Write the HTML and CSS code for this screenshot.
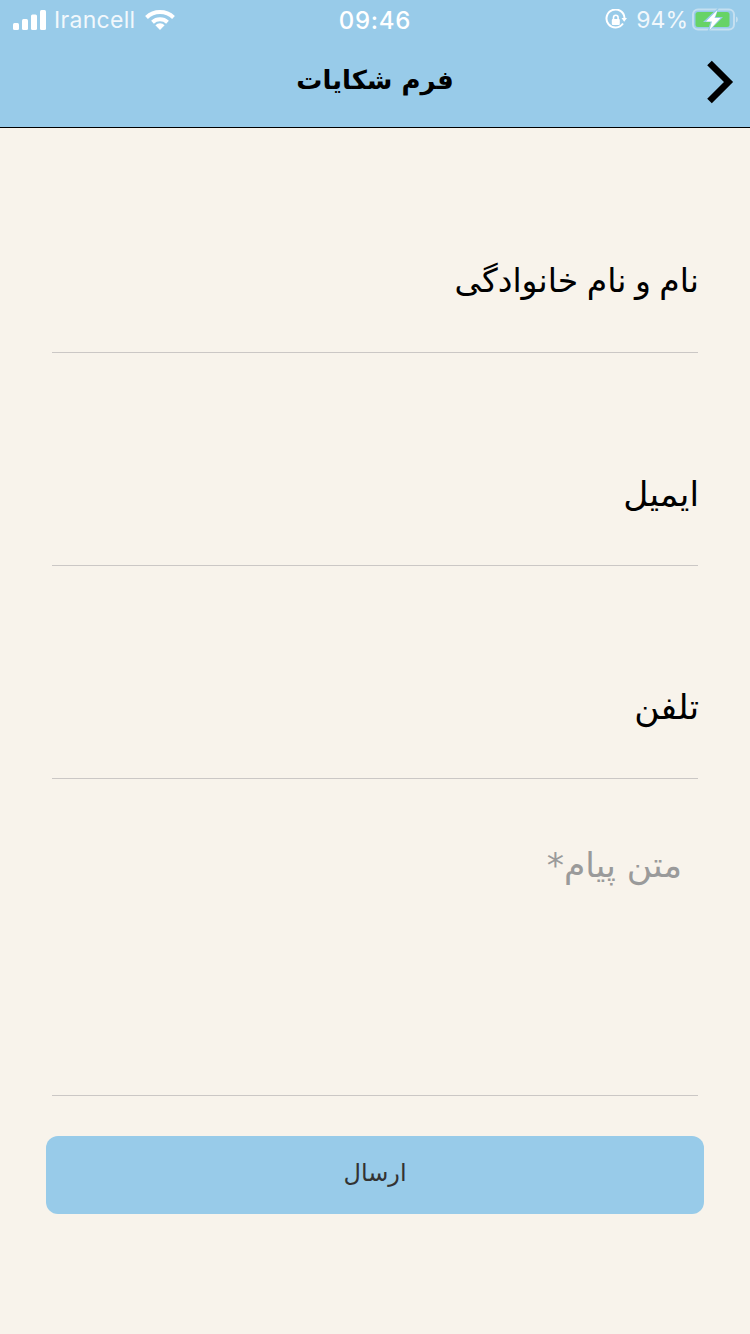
FILE: index.html
```html
<!DOCTYPE html>
<html lang="fa">
<head>
<meta charset="utf-8">
<title>فرم شکایات</title>
<link rel="stylesheet" href="styles.css">
</head>
<body>
<div class="top">
  <div class="status">
    <div class="status-side">
      <svg class="signal" width="33" height="22" viewBox="0 0 33 22"><rect x="0" y="14" width="6" height="7" rx="1.5"/><rect x="9" y="10" width="6" height="11" rx="1.5"/><rect x="18" y="5.500" width="6" height="15.500" rx="1.500"/><rect x="27" y="1" width="6" height="20" rx="1.500"/></svg>
      <span class="carrier">Irancell</span>
      <svg class="wifi" width="30" height="22" viewBox="0 0 30 22"><path d="M15 21l-4.600-4.800a6.500 6.500 0 0 1 9.200 0z"/><path d="M1.500 8.500a19.500 19.500 0 0 1 27 0" class="arc"/><path d="M7.500 13.300a11 11 0 0 1 15 0" class="arc"/></svg>
    </div>
    <div class="clock">09:46</div>
    <div class="status-side">
      <svg class="lock" width="22" height="22" viewBox="0 0 22 22"><path class="ring" d="M18 14.500A9 9 0 1 1 19.500 9"/><path class="fill" d="M16.500 9h5.500l-2.800 3.800z"/><rect class="fill" x="6.800" y="10" width="8" height="6" rx="1"/><path class="shackle" d="M8.500 10V8.500a2.300 2.300 0 0 1 4.600 0V10"/></svg>
      <span class="percent">94%</span>
      <svg class="battery" width="46" height="24" viewBox="0 0 46 24"><rect class="shell" x="1" y="1.500" width="41" height="20" rx="5"/><rect class="level" x="3.500" y="4" width="34" height="15" rx="2.500"/><path class="nub" d="M44 8.500c1.200.4 1.800 1.500 1.800 3s-.6 2.600-1.800 3z"/><path class="bolt-edge" d="M27 -1L11 14h7.500L15 25 31 9h-7.500z"/><path class="bolt" d="M25.500 2L14 13.500h6L17.500 22 28.500 10h-6z"/></svg>
    </div>
  </div>
  <header class="bar">
    <h1 class="title">فرم شکایات</h1>
    <svg class="chevron" width="28" height="44" viewBox="0 0 28 44"><path d="M3.500 3l19 19-19 19"/></svg>
  </header>
</div>
<main class="form">
  <div class="field"><span class="label label-long">نام و نام خانوادگی</span></div>
  <div class="field"><span class="label">ایمیل</span></div>
  <div class="field"><span class="label">تلفن</span></div>
  <div class="field field-message"><span class="placeholder">متن پیام*</span></div>
  <button class="send" type="button">ارسال</button>
</main>
</body>
</html>
```
FILE: styles.css
```css
* { box-sizing: border-box; }
html, body { margin: 0; padding: 0; }
body {
  width: 750px;
  height: 1334px;
  overflow: hidden;
  background: #f8f3eb;
  font-family: "DejaVu Sans", sans-serif;
}
.top {
  height: 128px;
  background: #98cbe9;
  border-bottom: 1px solid #000;
}
.status {
  height: 40px;
  display: flex;
  justify-content: space-between;
  align-items: center;
  padding: 0 12px 0 13px;
  color: #fff;
  position: relative;
}
.status-side { display: flex; align-items: center; }
.signal rect, .wifi path { fill: #fff; }
.wifi { margin-left: 10px; }
.wifi .arc { fill: none; stroke: #fff; stroke-width: 4; }
.carrier {
  font-family: Inter, sans-serif;
  font-size: 23px;
  margin-left: 8px;
  letter-spacing: .3px;
  color: #f2f8fc;
}
.clock {
  position: absolute;
  left: 0;
  right: 0;
  text-align: center;
  font-family: Inter, sans-serif;
  font-size: 24px;
  font-weight: 500;
  letter-spacing: .7px;
}
.lock { margin-right: 9px; }
.lock .ring { fill: none; stroke: #fff; stroke-width: 2; }
.lock .fill { fill: #fff; }
.lock .shackle { fill: none; stroke: #fff; stroke-width: 1.600; }
.percent {
  font-family: Inter, sans-serif;
  font-size: 23px;
  margin-right: 4px;
  color: #f2f8fc;
}
.battery .shell { fill: none; stroke: #c4dff0; stroke-width: 2; }
.battery .level { fill: #67d366; }
.battery .nub { fill: #c4dff0; }
.battery .bolt-edge { fill: #98cbe9; }
.battery .bolt { fill: #fff; }
.bar {
  height: 87px;
  display: flex;
  align-items: center;
  justify-content: center;
  position: relative;
}
.title {
  margin: 0 0 8px;
  font-size: 26px;
  font-weight: 700;
  color: #000;
  direction: rtl;
}
.chevron {
  position: absolute;
  right: 16px;
  top: 20px;
}
.chevron path { fill: none; stroke: #000; stroke-width: 6.500; }
.form {
  direction: rtl;
  padding: 0 46px;
  display: flex;
  flex-direction: column;
}
.field {
  height: 213px;
  margin: 0 6px;
  border-bottom: 1px solid #cbc7c5;
  display: flex;
  align-items: flex-end;
  padding-bottom: 48px;
}
.field:first-child { height: 225px; }
.label { font-size: 34.500px; line-height: 46px; color: #000; margin-right: -1px; }
.label-long { font-size: 33px; word-spacing: -2px; }
.field-message {
  height: 317px;
  align-items: flex-start;
  padding: 63px 16px 0 0;
}
.placeholder { font-size: 34.500px; line-height: 46px; color: #9a9a9a; }
.send {
  margin-top: 40px;
  height: 78px;
  width: 658px;
  border: 0;
  border-radius: 12px;
  background: #98cbe9;
  color: #333;
  font-family: inherit;
  font-size: 24px;
  padding: 0 0 4px;
}
```
